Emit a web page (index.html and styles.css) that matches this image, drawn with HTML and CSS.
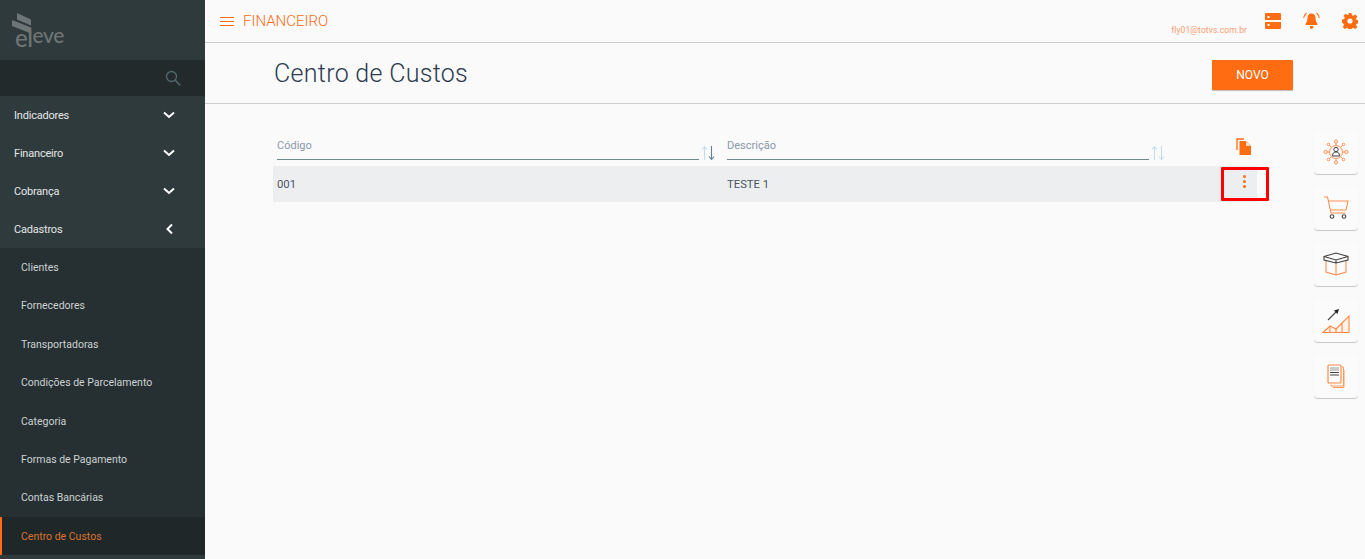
FILE: index.html
```html
<!DOCTYPE html>
<html lang="pt-BR">
<head>
<meta charset="utf-8">
<title>Centro de Custos</title>
<link rel="stylesheet" href="styles.css">
</head>
<body>
<div class="app">
  <aside class="sidebar">
    <div class="logo">
      <svg class="logo-mark" width="20" height="21" viewBox="0 0 20 21"><path d="M5 0 19 6.500v6L5 6.500zM0 7 19 14.500v6L0 13z" fill="#6d7577"/></svg>
      <div class="logo-text"><span class="logo-el">el</span><span class="logo-eve">eve</span></div>
    </div>
    <div class="search">
      <svg width="16" height="16" viewBox="0 0 16 16" fill="none" stroke="#56686b" stroke-width="1.300"><circle cx="6.500" cy="6.500" r="5"/><path d="m10.200 10.200 5 5" stroke-width="1.600"/></svg>
    </div>
    <nav class="menu">
      <a class="item">Indicadores<svg class="chev" width="12" height="8" viewBox="0 0 12 8"><path d="m1 1.500 5 4.500 5-4.500" fill="none" stroke="#fff" stroke-width="2"/></svg></a>
      <a class="item">Financeiro<svg class="chev" width="12" height="8" viewBox="0 0 12 8"><path d="m1 1.500 5 4.500 5-4.500" fill="none" stroke="#fff" stroke-width="2"/></svg></a>
      <a class="item">Cobrança<svg class="chev" width="12" height="8" viewBox="0 0 12 8"><path d="m1 1.500 5 4.500 5-4.500" fill="none" stroke="#fff" stroke-width="2"/></svg></a>
      <a class="item">Cadastros<svg class="chev" width="12" height="12" viewBox="0 0 12 12"><path d="M9 1.500 4.500 6 9 10.500" fill="none" stroke="#fff" stroke-width="2"/></svg></a>
      <div class="submenu">
        <a class="sub">Clientes</a>
        <a class="sub">Fornecedores</a>
        <a class="sub">Transportadoras</a>
        <a class="sub">Condições de Parcelamento</a>
        <a class="sub">Categoria</a>
        <a class="sub">Formas de Pagamento</a>
        <a class="sub">Contas Bancárias</a>
        <a class="sub active">Centro de Custos</a>
      </div>
    </nav>
  </aside>
  <main class="main">
    <header class="topbar">
      <div class="burger"><span></span><span></span><span></span></div>
      <div class="module">FINANCEIRO</div>
      <div class="user">fly01@totvs.com.br</div>
      <div class="top-icons">
        <svg width="16" height="16" viewBox="0 0 16 16"><path d="M1 0h14a1 1 0 0 1 1 1v6H0V1a1 1 0 0 1 1-1zM0 9h16v6a1 1 0 0 1-1 1H1a1 1 0 0 1-1-1z" fill="#ff6c11"/><rect x="2.500" y="3" width="2" height="2" fill="#fff"/><rect x="2.500" y="11" width="2" height="2" fill="#fff"/></svg>
        <svg width="17" height="17" viewBox="0 0 17 17"><path d="M8.500 1.500c-2.700 0-4 2-4 4.500 0 3-1 4.500-2 6v1h12v-1c-1-1.500-2-3-2-6 0-2.500-1.300-4.500-4-4.500zM7 14h3a1.500 1.500 0 0 1-3 2z" fill="#ff6c11"/><path d="M3.500 1C2 2.200 1 3.800.8 6M13.500 1c1.500 1.200 2.500 2.800 2.700 5" fill="none" stroke="#ff6c11" stroke-width="1.100"/></svg>
        <svg width="16" height="16" viewBox="0 0 16 16"><path d="M6.500 0h3l.4 2.200 1.400.6 1.900-1.300 2.100 2.100-1.300 1.900.6 1.400 2.200.4v3l-2.200.4-.6 1.400 1.300 1.900-2.100 2.100-1.900-1.300-1.400.6-.4 2.200h-3l-.4-2.200-1.400-.6-1.900 1.300-2.100-2.100 1.300-1.900-.6-1.400L0 9.500v-3l2.200-.4.6-1.400-1.300-1.900 2.100-2.100 1.900 1.300 1.400-.6z" fill="#ff6c11"/><circle cx="8" cy="8" r="2.600" fill="#fafafa"/></svg>
      </div>
    </header>
    <section class="titlebar">
      <h1>Centro de Custos</h1>
      <button class="btn">NOVO</button>
    </section>
    <section class="content">
      <div class="table-wrap">
        <div class="thead">
          <div class="th"><div class="th-label">Código</div><div class="sort"><svg width="16" height="16" viewBox="0 0 16 16" fill="none" stroke-width="1.100"><path d="M4.500 15V2M2 4.500l2.500-3 2.500 3" stroke="#c5dde8"/><path d="M11.500 1v13M9 11.500l2.500 3 2.500-3" stroke="#5f8194"/></svg></div></div>
          <div class="th"><div class="th-label">Descrição</div><div class="sort"><svg width="16" height="16" viewBox="0 0 16 16" fill="none" stroke-width="1.100"><path d="M4.500 15V2M2 4.500l2.500-3 2.500 3" stroke="#c5dde8"/><path d="M11.500 1v13M9 11.500l2.500 3 2.500-3" stroke="#c5dde8"/></svg></div></div>
          <div class="th-act"><svg width="16" height="17" viewBox="0 0 16 17"><path d="M1 12V1h7" fill="none" stroke="#ff6c11" stroke-width="1.300"/><path d="M3.500 3H10l5 5v9H3.500z" fill="#ff6c11"/><path d="M10 3v5h5z" fill="#ffd5ba"/></svg></div>
        </div>
        <div class="row">
          <div class="td">001</div>
          <div class="td td-desc">TESTE 1</div>
          <div class="td-act"><span class="dots"><i></i><i></i><i></i></span></div>
          <div class="highlight"></div>
        </div>
      </div>
      <aside class="rail">
        <div class="card"><svg width="26" height="26" viewBox="0 0 26 26" fill="none" stroke="#ff8f4f" stroke-width="1"><circle cx="13" cy="13" r="6.500"/><circle cx="13" cy="2.500" r="1.600"/><circle cx="13" cy="23.500" r="1.600"/><circle cx="2.500" cy="13" r="1.600"/><circle cx="23.500" cy="13" r="1.600"/><circle cx="5.500" cy="5.500" r="1.300"/><circle cx="20.500" cy="5.500" r="1.300"/><circle cx="5.500" cy="20.500" r="1.300"/><circle cx="20.500" cy="20.500" r="1.300"/><path d="M13 4v2.500M13 19.500V22M4 13h2.500M19.500 13H22M6.500 6.500 8.500 8.500M19.500 6.500l-2 2M6.500 19.500l2-2M19.500 19.500l-2-2"/><circle cx="13" cy="10.500" r="2.200" stroke="#444"/><path d="M9.500 17c0-3 1.500-4 3.500-4s3.500 1 3.500 4z" stroke="#444"/></svg></div>
        <div class="card"><svg width="26" height="24" viewBox="0 0 26 24" fill="none" stroke="#ff8f4f" stroke-width="1.100"><path d="M1 1h3.500L8 17h14.500"/><path d="M5 5h20l-2 9H7.500"/><circle cx="9" cy="20.500" r="1.800" stroke="#444"/><circle cx="21" cy="20.500" r="1.800" stroke="#444"/></svg></div>
        <div class="card"><svg width="26" height="24" viewBox="0 0 26 24" fill="none" stroke-width="1.100"><path d="M3 8v12l10 3 10-3V8M13 11v12" stroke="#ff8f4f"/><path d="M1 4.500 13 1l12 3.500v3.500L13 11 1 8zM1 4.500 13 8l12-3.500M13 8v3" stroke="#444"/></svg></div>
        <div class="card"><svg width="28" height="25" viewBox="0 0 28 25" fill="none"><path d="M1 24.500 8 18l6 3 6-6 7-7v16.500z" fill="#fff2ea" stroke="#ff8a45" stroke-width="1.100"/><path d="M8 18v6.500M14 21v3.500M20 15v9.500" stroke="#ff8a45" stroke-width="1.100"/><path d="m6 12 8-8" stroke="#444" stroke-width="1.100"/><path d="m17 1-5 1.500 3.500 3.500z" fill="#222"/></svg></div>
        <div class="card"><svg width="18" height="24" viewBox="0 0 18 24" fill="none" stroke="#ff9a5e"><path d="M15 3h1.500v19H4V20.500M17 6v17.500H6" stroke-width="1"/><rect x="1" y="1" width="13" height="18" rx="1" stroke="#ff8a45" stroke-width="1.200"/><path d="M3 4h9M3 6h9" stroke="#999" stroke-width="1"/><path d="M3 8.500h9M3 11h9" stroke="#444" stroke-width="1"/></svg></div>
      </aside>
    </section>
  </main>
</div>
</body>
</html>
```
FILE: styles.css
```css
* { box-sizing: border-box; }
html, body { margin: 0; height: 100%; overflow: hidden; }
body { font-family: "Roboto", "Liberation Sans", sans-serif; background: #fafafa; color: #3a4450; }
.app { display: flex; height: 559px; }

.sidebar { width: 205px; flex: none; background: #2f3a3c; display: flex; flex-direction: column; }
.logo { height: 60px; padding: 13px 0 0 12px; position: relative; }
.logo-mark { display: block; }
.logo-text { position: absolute; left: 15px; top: 21px; color: #6d7577; font-family: "Lato", sans-serif; font-weight: 500; line-height: 26px; white-space: nowrap; }
.logo-el { font-size: 24px; position: relative; top: 4px; letter-spacing: -.5px; }
.logo-eve { font-size: 21px; letter-spacing: -.3px; }
.search { height: 36px; background: #222a2c; display: flex; align-items: center; justify-content: flex-end; padding-right: 24px; }
.menu { flex: 1; }
.item { display: flex; align-items: center; justify-content: space-between; height: 38px; padding: 0 30px 0 14px; font-size: 11px; letter-spacing: -.2px; color: #e4e7e8; }
.submenu { background: #263033; }
.sub { display: flex; align-items: center; height: 38.400px; padding: .5px 0 0 21px; font-size: 10.500px; color: #ccd0d2; }
.sub.active { background: #1f2729; color: #d9732f; border-left: 2px solid #ff6c11; padding-left: 19px; }

.main { flex: 1; min-width: 0; display: flex; flex-direction: column; }
.topbar { height: 43px; border-bottom: 1px solid #cfcfcf; display: flex; align-items: center; padding-left: 15px; position: relative; }
.burger { width: 14px; display: flex; flex-direction: column; gap: 3px; margin-right: 9px; }
.burger span { height: 1px; background: #ff6c11; }
.module { font-size: 15px; color: #ff6c11; font-weight: 300; flex: 1; }
.user { font-size: 8.500px; color: #ff9a6e; margin-top: 17px; margin-right: 18px; letter-spacing: .1px; }
.top-icons { display: flex; align-items: center; gap: 22px; padding-right: 7px; margin-top: -1px; }

.titlebar { height: 61px; border-bottom: 1px solid #cfcfcf; display: flex; align-items: center; justify-content: space-between; padding: 0 72px 0 69px; }
h1 { margin: 0; font-size: 25px; font-weight: 300; color: #2c3a50; letter-spacing: .3px; }
.btn { width: 81px; height: 30px; border: 0; border-radius: 1px; background: #ff6c11; color: #fff; font: 400 12px "Roboto", sans-serif; box-shadow: 0 1px 1px #bbb; margin-top: 3px; }

.content { flex: 1; display: flex; padding: 26px 7px 0 68px; }
.table-wrap { width: 984px; }
.thead { display: grid; grid-template-columns: 450px 450px 84px; height: 36px; }
.th { display: flex; align-items: flex-end; padding: 0 6px 0 4px; }
.th-label { flex: 1; height: 29px; border-bottom: 1px solid #6f8a90; font-size: 11px; color: #8a98a8; padding-top: 8px; margin-bottom: 6px; }
.sort { width: 18px; padding-left: 1px; margin-bottom: 3px; height: 18px; }
.th-act { display: flex; justify-content: flex-start; padding: 8px 0 0 63px; }
.row { display: grid; grid-template-columns: 450px 450px 84px; height: 36px; background: #edeef0; align-items: center; position: relative; font-size: 11.300px; color: #4a5560; }
.td { padding-left: 4px; }
.td-act { display: flex; padding-left: 70px; margin-top: -5px; }
.dots { display: flex; flex-direction: column; gap: 2px; }
.dots i { width: 3px; height: 3px; border-radius: 50%; background: #ff6c11; }
.highlight { position: absolute; left: 948px; top: 1px; width: 48px; height: 34px; border: 3px solid #f00; border-radius: 1px; }

.rail { margin-left: 57px; width: 44px; flex: none; display: flex; flex-direction: column; gap: 12px; }
.card { height: 44px; border-radius: 4px; background: #fbfbfb; box-shadow: 0 1px 0 #c8c8c8, 0 0 1px #eee; display: flex; align-items: center; justify-content: center; }
```
